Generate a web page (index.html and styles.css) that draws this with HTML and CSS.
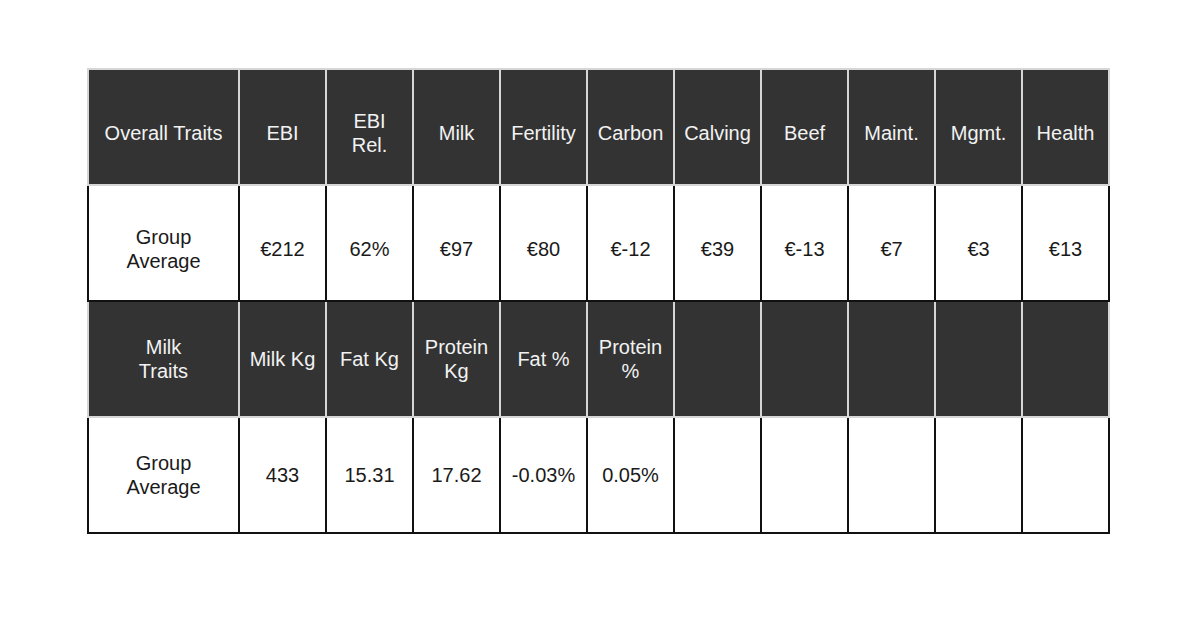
FILE: index.html
```html
<!DOCTYPE html>
<html>
<head>
<meta charset="utf-8">
<link rel="stylesheet" href="styles.css">
</head>
<body>
<div class="page">
<table class="traits">
  <colgroup>
    <col class="c-first">
    <col class="c"><col class="c"><col class="c"><col class="c"><col class="c">
    <col class="c"><col class="c"><col class="c"><col class="c"><col class="c">
  </colgroup>
  <tr class="head shifted">
    <td>Overall Traits</td>
    <td>EBI</td>
    <td>EBI<br>Rel.</td>
    <td>Milk</td>
    <td>Fertility</td>
    <td>Carbon</td>
    <td>Calving</td>
    <td>Beef</td>
    <td>Maint.</td>
    <td>Mgmt.</td>
    <td>Health</td>
  </tr>
  <tr class="body shifted">
    <td>Group<br>Average</td>
    <td>€212</td>
    <td>62%</td>
    <td>€97</td>
    <td>€80</td>
    <td>€-12</td>
    <td>€39</td>
    <td>€-13</td>
    <td>€7</td>
    <td>€3</td>
    <td>€13</td>
  </tr>
  <tr class="head">
    <td>Milk<br>Traits</td>
    <td>Milk Kg</td>
    <td>Fat Kg</td>
    <td>Protein<br>Kg</td>
    <td>Fat %</td>
    <td>Protein<br>%</td>
    <td></td><td></td><td></td><td></td><td></td>
  </tr>
  <tr class="body">
    <td>Group<br>Average</td>
    <td>433</td>
    <td>15.31</td>
    <td>17.62</td>
    <td>-0.03%</td>
    <td>0.05%</td>
    <td></td><td></td><td></td><td></td><td></td>
  </tr>
</table>
</div>
</body>
</html>
```
FILE: styles.css
```css
html, body {
  margin: 0;
  padding: 0;
  background: #ffffff;
}
.page {
  padding: 68px 0 0 87px;
}
.traits {
  border-collapse: collapse;
  table-layout: fixed;
  width: 1023px;
  font-family: "Liberation Sans", Arial, sans-serif;
  font-size: 20px;
  line-height: 24px;
}
.c-first { width: 151px; }
.c { width: 87px; }
.traits td {
  height: 116px;
  padding: 0 1px;
  text-align: center;
  vertical-align: middle;
  border: 2px solid #111;
  box-sizing: border-box;
  white-space: nowrap;
}
.shifted td {
  padding-top: 11px;
}
.head td {
  background: #333333;
  color: #f2f2f2;
  border-color: #d6d6d6;
}
.body td {
  background: #ffffff;
  color: #1a1a1a;
  border-color: #111111;
}
```
